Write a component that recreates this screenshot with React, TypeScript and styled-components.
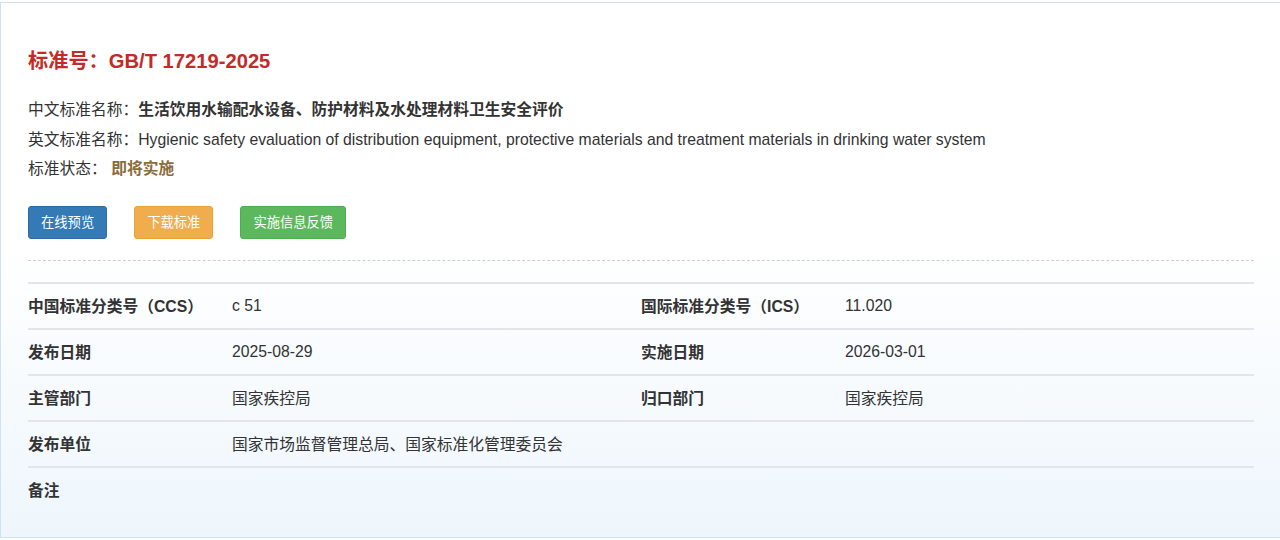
import React from "react";
import styled, { createGlobalStyle } from "styled-components";

const Global = createGlobalStyle`
  html, body { margin: 0; padding: 0; background: #fff; overflow: hidden; }
  body { font-family: "Liberation Sans", "Noto Sans CJK SC", sans-serif; color: #333; }
`;

const Panel = styled.div`
  margin-top: 2px;
  width: 1300px;
  height: 536px;
  border: 1px solid #cfe2f1;
  border-right: none;
  background: linear-gradient(to bottom, #ffffff 0%, #ffffff 45%, #eef6fc 100%);
  padding: 44px 0 0 27px;
  box-sizing: border-box;
`;

const Inner = styled.div`
  width: 1226px;
`;

const Title = styled.h1`
  margin: 0;
  font-size: 20.2px;
  line-height: 28px;
  font-weight: bold;
  color: #c52b26;
`;

const InfoList = styled.div`
  margin-top: 20px;
  display: flex;
  flex-direction: column;
`;

const InfoLine = styled.div`
  font-size: 15.75px;
  line-height: 29.5px;
  color: #333;
`;

const Strong = styled.b<{ $tone?: string }>`
  font-weight: bold;
  color: ${(p) => p.$tone || "#333"};
`;

const Actions = styled.div`
  display: flex;
  gap: 27px;
  margin-top: 22px;
`;

const Button = styled.button<{ $bg: string; $border: string }>`
  font-family: inherit;
  font-size: 13.3px;
  line-height: 19px;
  padding: 6px 12px;
  height: 33px;
  color: #fff;
  background: ${(p) => p.$bg};
  border: 1px solid ${(p) => p.$border};
  border-radius: 3px;
  cursor: pointer;
`;

const Divider = styled.div`
  margin-top: 21px;
  border-top: 1px dashed #cfcfcf;
`;

const Table = styled.div`
  margin-top: 21px;
  display: grid;
  grid-template-columns: 204px 409px 204px 1fr;
`;

const Cell = styled.div<{ $head?: boolean }>`
  height: 46px;
  display: flex;
  align-items: center;
  border-top: 2px solid #e2e6ea;
  font-size: 15.75px;
  font-weight: ${(p) => (p.$head ? "bold" : "normal")};
  color: #333;
  box-sizing: border-box;
`;

const NoteCell = styled(Cell)`
  grid-column: 2 / span 3;
`;

const rows: [string, string, string, string][] = [
  ["中国标准分类号（CCS）", "c 51", "国际标准分类号（ICS）", "11.020"],
  ["发布日期", "2025-08-29", "实施日期", "2026-03-01"],
  ["主管部门", "国家疾控局", "归口部门", "国家疾控局"],
  ["发布单位", "国家市场监督管理总局、国家标准化管理委员会", "", ""],
];

export default function App() {
  return (
    <>
      <Global />
      <Panel>
        <Inner>
          <Title>标准号：GB/T 17219-2025</Title>
          <InfoList>
            <InfoLine>
              中文标准名称：<Strong>生活饮用水输配水设备、防护材料及水处理材料卫生安全评价</Strong>
            </InfoLine>
            <InfoLine>
              英文标准名称：Hygienic safety evaluation of distribution equipment, protective materials and treatment materials in drinking water system
            </InfoLine>
            <InfoLine>
              {"标准状态： "}
              <Strong $tone="#8a6d3b">即将实施</Strong>
            </InfoLine>
          </InfoList>
          <Actions>
            <Button $bg="#337ab7" $border="#2e6da4">在线预览</Button>
            <Button $bg="#f0ad4e" $border="#eea236">下载标准</Button>
            <Button $bg="#5cb85c" $border="#4cae4c">实施信息反馈</Button>
          </Actions>
          <Divider />
          <Table>
            {rows.map((r) => (
              <React.Fragment key={r[0]}>
                <Cell $head>{r[0]}</Cell>
                <Cell>{r[1]}</Cell>
                <Cell $head>{r[2]}</Cell>
                <Cell>{r[3]}</Cell>
              </React.Fragment>
            ))}
            <Cell $head>备注</Cell>
            <NoteCell />
          </Table>
        </Inner>
      </Panel>
    </>
  );
}
